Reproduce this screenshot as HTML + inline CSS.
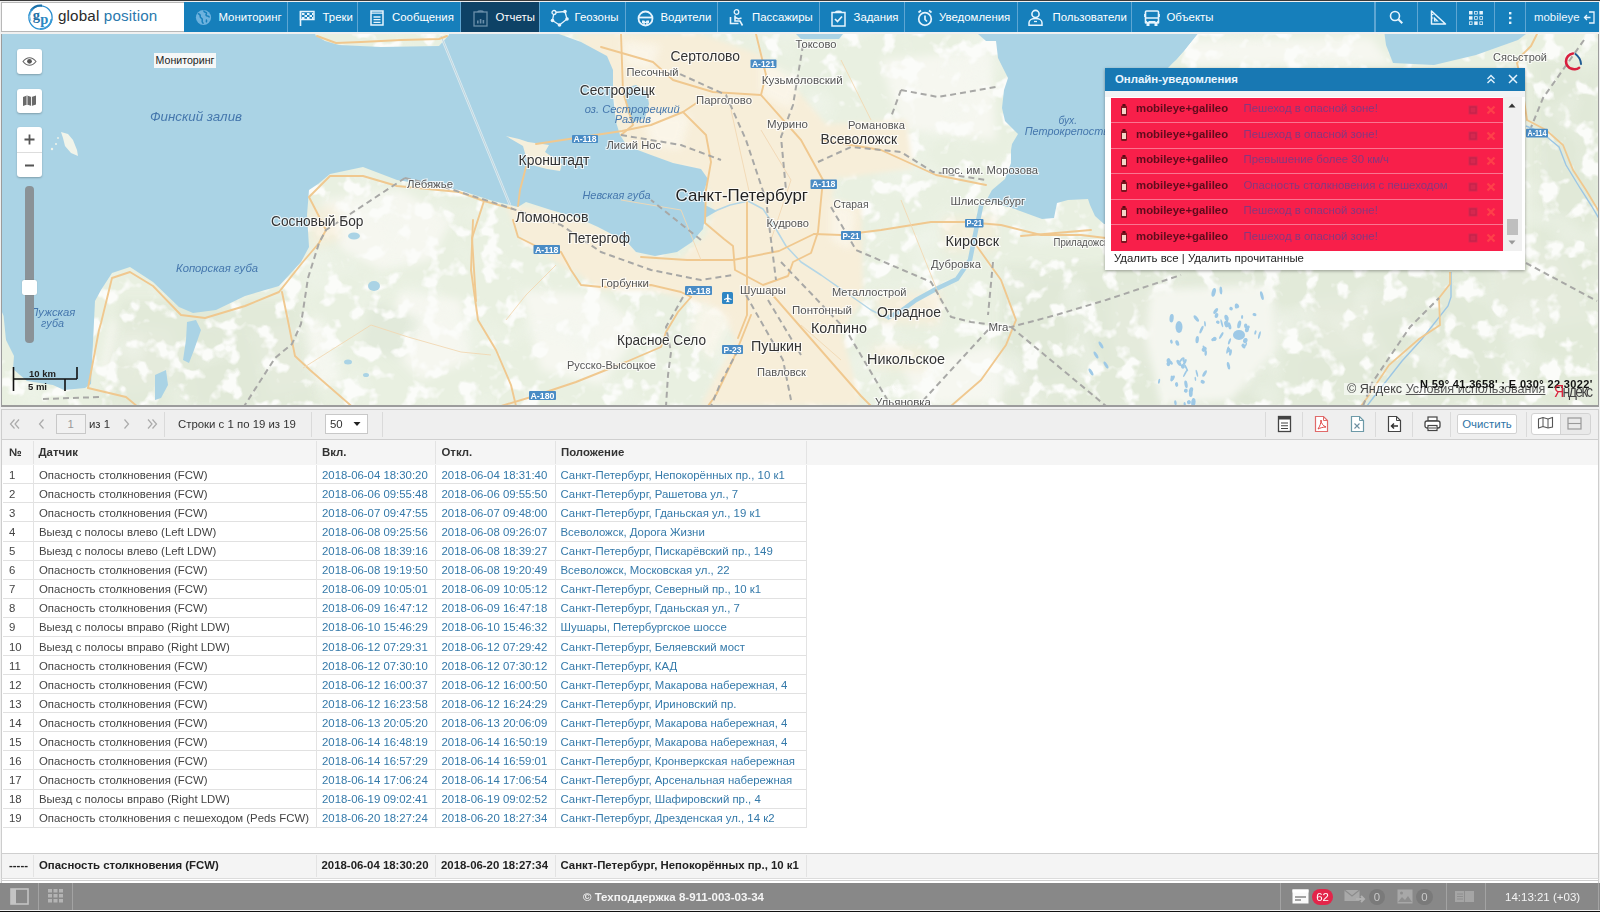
<!DOCTYPE html>
<html><head><meta charset="utf-8">
<style>
*{box-sizing:border-box;margin:0;padding:0}
html,body{width:1600px;height:912px;overflow:hidden;background:#f0f0f0;font-family:"Liberation Sans",sans-serif;font-size:11.4px;color:#333}
.abs{position:absolute}
#topline{left:0;top:0;width:1600px;height:1px;background:#3a3a3a}
#logo{left:1px;top:2px;width:183px;height:30px;background:#fff;border:1px solid #b8b8b8;border-right:none}
#nav{left:184px;top:2px;width:1415px;height:30px;background:#167fbb}
.ni{position:absolute;top:0;height:30px;color:#fff;font-size:11.4px;line-height:30px;white-space:nowrap;border-right:1px solid #5ea6d3}
.ni svg{position:absolute;top:7px}
.ni span{position:absolute;top:0}
#map{left:1px;top:34px;width:1598px;height:373px;background:#eef3e6;border:1px solid #9c9c9c;border-width:0 1px 2px 1px;overflow:hidden}
#tb{left:1px;top:409px;width:1598px;height:30px;background:#efefef;border:1px solid #c9c9c9;border-bottom:1px solid #d0d0d0}
#grid{left:1px;top:439px;width:1598px;height:444px;background:#fff;border-left:1px solid #c9c9c9;border-right:1px solid #c9c9c9}
#status{left:0;top:883px;width:1600px;height:27px;background:#878787}
#botline{left:0;top:910px;width:1600px;height:2px;background:#1e1e1e}
.ml{position:absolute;white-space:nowrap;color:#555;font-size:10.6px;line-height:14px;text-shadow:0 0 2px #fff,0 0 2px #fff}
.ml.med{font-size:13.6px;color:#333;line-height:18px}
.ml.big{color:#222;line-height:22px}
.ml.sm{font-size:10.8px;color:#555}
.mlw{position:absolute;white-space:nowrap;color:#3f75a8;font-style:italic;line-height:16px}
.shield{position:absolute;height:9.5px;background:#4f8fc6;color:#fff;font-size:8.5px;font-weight:700;line-height:9.5px;text-align:center;border-radius:1px;letter-spacing:-0.2px}
.ctl{position:absolute;width:25px;background:#fff;border-radius:3px;box-shadow:0 1px 2px rgba(0,0,0,.25)}
.prow{position:absolute;left:5.5px;width:392.5px;height:26px;background:#f81f4a}
.psep{position:absolute;left:5.5px;width:392.5px;height:1px;background:#fa7590}
.pn{position:absolute;left:25.5px;top:3.8px;font-size:11.4px;font-weight:700;color:#5e0b1c;line-height:14px;white-space:nowrap}
.pm{position:absolute;left:133px;top:3.8px;font-size:11.4px;color:#85387f;line-height:14px;white-space:nowrap}
.tbtxt{position:absolute;font-size:11.4px;color:#333;line-height:14px;white-space:nowrap}
.tsep{position:absolute;top:412px;width:1px;height:25px;background:#dadada}
.th{position:absolute;font-size:11.4px;font-weight:700;color:#333;line-height:14px;white-space:nowrap}
.td{position:absolute;font-size:11.4px;color:#444;line-height:14px;white-space:nowrap}
.td.lk{color:#3479a9}
</style></head><body>
<div id="topline" class="abs"></div>
<div id="logo" class="abs">
<svg class="abs" style="left:24px;top:1px" width="28" height="27" viewBox="0 0 28 27">
<circle cx="14.5" cy="13.5" r="11.6" fill="none" stroke="#2a8fd0" stroke-width="1.3"/>
<path d="M5 6.5A12 12 0 0 1 16 1.6" fill="none" stroke="#1b6fa8" stroke-width="2.2"/>
<path d="M3.2 12A11 11 0 0 1 7 4.5" fill="none" stroke="#2a8fd0" stroke-width="1.4"/>
<path d="M4.8 17A10 10 0 0 1 5.5 7" fill="none" stroke="#7cc3e8" stroke-width="1"/>
<path d="M14 25A11 11 0 0 0 25.5 15" fill="none" stroke="#3a9ad6" stroke-width="1.8"/>
<text x="6.8" y="16" font-family="Liberation Serif" font-weight="700" font-size="14.5" fill="#1d6fa6">g</text>
<text x="14.2" y="19.5" font-family="Liberation Serif" font-weight="700" font-size="14.5" fill="#2a86c2">p</text>
</svg>
<div class="abs" style="left:56px;top:1px;font-size:15.2px;line-height:24px;color:#2a2a2a;white-space:nowrap;letter-spacing:0.15px">global <span style="color:#2a78ad">position</span></div>
</div>
<div id="nav" class="abs">
<div class="ni" style="left:0;width:104px"><svg style="left:11px" width="17" height="17" viewBox="0 0 17 17"><circle cx="8.5" cy="8.5" r="7.6" fill="#6db2de"/><path d="M3 4.5c1.5.5 2.5 1.5 2.2 3-.2 1 1 1.5 1.8 2.3.7.8-.2 2 .3 3.2.3.8 1 1.3 1 1.8M9 1.5c-.3 1 .5 1.7 1.5 1.8 1 .1 1.3 1.2.7 2-.6.8.2 1.8 1.3 1.7 1 0 1.7.8 2 1.6M11 10.5c.7.6.8 1.8.2 2.8" fill="none" stroke="#167fbb" stroke-width="1.5"/></svg><span style="left:34.5px">Мониторинг</span></div>
<div class="ni" style="left:104px;width:70px"><svg style="left:10.5px;top:7.5px" width="17" height="16" viewBox="0 0 17 16"><path d="M1.5 1v15" stroke="#e6f4fd" stroke-width="1.6"/><path d="M1.5 1.5h13.5v8H1.5z" fill="none" stroke="#e6f4fd" stroke-width="1.4"/><path d="M3 3h2.5v2H3zM8 3h2.5v2H8zM5.5 5h2.5v2H5.5zM10.5 5h2.5v2h-2.5zM3 7h2.5v2H3zM8 7h2.5v2H8zM13 3h1.5v2H13zM13 7h1.5v2H13z" fill="#e6f4fd"/></svg><span style="left:34.5px">Треки</span></div>
<div class="ni" style="left:174px;width:103px"><svg style="left:11.5px;top:8px" width="14" height="16" viewBox="0 0 14 16"><rect x="1" y="1" width="12" height="14" fill="none" stroke="#e6f4fd" stroke-width="1.5"/><path d="M1 3.2h12M3.5 7h7M3.5 9.7h7M3.5 12.3h7" stroke="#e6f4fd" stroke-width="1.3"/></svg><span style="left:34px">Сообщения</span></div>
<div class="ni" style="left:277px;width:79px;background:#0e4266;border-right-color:#5ea6d3"><svg style="left:12px;top:7.5px" width="15" height="17" viewBox="0 0 15 17"><rect x="1" y="2" width="13" height="14" fill="none" stroke="#6b8faa" stroke-width="1.3"/><path d="M4.5 1.8c1-1 5-1 6 0" fill="none" stroke="#6b8faa" stroke-width="1.4"/><path d="M4 13.5v-3h1.6v3zM6.8 13.5v-4.5h1.6v4.5zM9.6 13.5v-3.5h1.6v3.5z" fill="#6b8faa"/></svg><span style="left:34.5px">Отчеты</span></div>
<div class="ni" style="left:356px;width:86px"><svg style="left:10px;top:6.5px" width="19" height="18" viewBox="0 0 19 18"><path d="M4 3.5L15 2.5 17 10 9.5 16 2.5 11.5z" fill="none" stroke="#e6f4fd" stroke-width="1.3"/><circle cx="4" cy="3.5" r="2" fill="#167fbb" stroke="#e6f4fd" stroke-width="1.3"/><circle cx="15" cy="2.5" r="1.8" fill="#e6f4fd"/><circle cx="17" cy="10" r="1.8" fill="#e6f4fd"/><circle cx="9.5" cy="16" r="1.8" fill="#e6f4fd"/><circle cx="2.5" cy="11.5" r="1.8" fill="#e6f4fd"/></svg><span style="left:34.5px">Геозоны</span></div>
<div class="ni" style="left:442px;width:92px"><svg style="left:11px;top:7.5px" width="17" height="17" viewBox="0 0 17 17"><circle cx="8.5" cy="8.5" r="7" fill="none" stroke="#e6f4fd" stroke-width="1.8"/><path d="M2 7.5h13" stroke="#e6f4fd" stroke-width="1.8"/><path d="M5 10.5h2.3l1.2 1.5 1.2-1.5H12v2.5H5z" fill="#e6f4fd"/><path d="M7 13v3M10 13v3" stroke="#e6f4fd" stroke-width="1.5"/></svg><span style="left:34.5px">Водители</span></div>
<div class="ni" style="left:534px;width:102px"><svg style="left:11px;top:7px" width="16" height="17" viewBox="0 0 16 17"><circle cx="7.5" cy="3" r="2.3" fill="none" stroke="#e6f4fd" stroke-width="1.3"/><path d="M6 6.5v5.5h5l2.5 4.5M6.5 8.5l3 1.5 3-1M1.5 8v6.5h8" fill="none" stroke="#e6f4fd" stroke-width="1.6"/></svg><span style="left:34px">Пассажиры</span></div>
<div class="ni" style="left:636px;width:85px"><svg style="left:11px;top:7.5px" width="15" height="17" viewBox="0 0 15 17"><rect x="1" y="2.5" width="13" height="13.5" fill="none" stroke="#e6f4fd" stroke-width="1.5"/><path d="M4.5 2.3c1-1.3 5-1.3 6 0" fill="none" stroke="#e6f4fd" stroke-width="1.6"/><path d="M4 9l2.5 2.5 4.5-5" fill="none" stroke="#e6f4fd" stroke-width="1.7"/></svg><span style="left:33.5px">Задания</span></div>
<div class="ni" style="left:721px;width:113px"><svg style="left:11.5px;top:6.5px" width="16" height="18" viewBox="0 0 16 18"><circle cx="8" cy="10" r="6.3" fill="none" stroke="#e6f4fd" stroke-width="1.7"/><path d="M8 6.5v4l2 2M1.5 3.5l2.5-2M14.5 3.5l-2.5-2" fill="none" stroke="#e6f4fd" stroke-width="1.7"/></svg><span style="left:34px">Уведомления</span></div>
<div class="ni" style="left:834px;width:114px"><svg style="left:10px;top:7px" width="15" height="17" viewBox="0 0 15 17"><circle cx="7.5" cy="5" r="3.6" fill="none" stroke="#e6f4fd" stroke-width="1.6"/><path d="M1 16.2v-2.5c0-2.5 3-4.2 6.5-4.2s6.5 1.7 6.5 4.2v2.5z" fill="none" stroke="#e6f4fd" stroke-width="1.5"/><path d="M6 12.5h3" stroke="#e6f4fd" stroke-width="1.3"/></svg><span style="left:34.5px">Пользователи</span></div>
<div class="ni" style="left:948px;width:243px;border-right:1px solid #5ea6d3"><svg style="left:12px;top:7.5px" width="16" height="16" viewBox="0 0 16 16"><path d="M2.5 1h11c.8 0 1 .5 1 1v10.5h-13V2c0-.5.2-1 1-1z" fill="none" stroke="#e6f4fd" stroke-width="1.6"/><path d="M1.5 8h13" stroke="#e6f4fd" stroke-width="1.5"/><path d="M1 11h14v2.5H1z" fill="#e6f4fd"/><rect x="2.5" y="13" width="3" height="3" fill="#e6f4fd"/><rect x="10.5" y="13" width="3" height="3" fill="#e6f4fd"/><path d="M.3 4v3M15.7 4v3" stroke="#e6f4fd" stroke-width="1.2"/><rect x="3" y="10.5" width="1.6" height="1.3" fill="#167fbb"/><rect x="11.4" y="10.5" width="1.6" height="1.3" fill="#167fbb"/></svg><span style="left:34.5px">Объекты</span></div>
<div class="ni" style="left:1190.5px;width:43px;border-left:1px solid #5ea6d3"><svg style="left:13px;top:8px" width="15" height="15" viewBox="0 0 15 15"><circle cx="6" cy="6" r="4.5" fill="none" stroke="#e6f4fd" stroke-width="1.6"/><path d="M9.3 9.3l4 4" stroke="#e6f4fd" stroke-width="2"/></svg></div>
<div class="ni" style="left:1233.5px;width:39px"><svg style="left:12px;top:8px" width="17" height="15" viewBox="0 0 17 15"><path d="M1.5 1v13h14z" fill="none" stroke="#e6f4fd" stroke-width="1.5" stroke-linejoin="round"/><path d="M4.5 8v3h3z" fill="none" stroke="#e6f4fd" stroke-width="1.1"/><path d="M1.5 4.5h2M1.5 8h2" stroke="#e6f4fd" stroke-width="1"/></svg></div>
<div class="ni" style="left:1272px;width:39px"><svg style="left:12px;top:7.5px" width="16" height="16" viewBox="0 0 16 16"><g fill="#e6f4fd"><rect x="1" y="1" width="3.5" height="3.5"/><rect x="6.2" y="1" width="3.5" height="3.5"/><rect x="11.4" y="1" width="3.5" height="3.5"/><rect x="1" y="6.2" width="3.5" height="3.5"/><rect x="6.2" y="6.2" width="3.5" height="3.5"/><rect x="11.4" y="6.2" width="3.5" height="3.5"/><rect x="1" y="11.4" width="3.5" height="3.5"/><rect x="6.2" y="11.4" width="3.5" height="3.5"/><rect x="11.4" y="11.4" width="3.5" height="3.5"/></g><g fill="#167fbb"><rect x="7" y="1.8" width="1.9" height="1.9"/><rect x="12.2" y="7" width="1.9" height="1.9"/><rect x="1.8" y="12.2" width="1.9" height="1.9"/><rect x="12.2" y="12.2" width="1.9" height="1.9"/><rect x="7" y="7" width="1.9" height="1.9"/></g></svg></div>
<div class="ni" style="left:1311px;width:31px"><svg style="left:13px;top:9px" width="5" height="14" viewBox="0 0 5 14"><g fill="#e6f4fd"><rect x="1" y="1" width="2.4" height="2.4"/><rect x="1" y="5.8" width="2.4" height="2.4"/><rect x="1" y="10.6" width="2.4" height="2.4"/></g></svg></div>
<div class="ni" style="left:1342px;width:73px;border-right:none"><span style="left:8px;color:#eef8ff">mobileye</span><svg style="left:57px;top:9px" width="12" height="13" viewBox="0 0 12 13"><path d="M6 1h5v11H6" fill="none" stroke="#e6f4fd" stroke-width="1.3"/><path d="M1.5 6.5h6M4 4l-2.5 2.5L4 9" fill="none" stroke="#e6f4fd" stroke-width="1.3"/></svg></div>
</div>

<div id="map" class="abs">
<svg class="abs" style="left:0;top:0" width="1598" height="372" viewBox="1 34 1598 372">
<defs>
<filter id="blur1"><feGaussianBlur stdDeviation="4"/></filter>
<filter id="blur2" x="-10%" y="-10%" width="120%" height="120%"><feGaussianBlur stdDeviation="2.5"/></filter>
<filter id="tex" x="0" y="30" width="1600" height="380" filterUnits="userSpaceOnUse"><feTurbulence type="fractalNoise" baseFrequency="0.05" numOctaves="3" seed="11"/><feColorMatrix type="matrix" values="0 0 0 0 0.965  0 0 0 0 0.972  0 0 0 0 0.95  7 0 0 0 -3.8"/></filter>
<filter id="tex2" x="0" y="30" width="1600" height="380" filterUnits="userSpaceOnUse"><feTurbulence type="fractalNoise" baseFrequency="0.02" numOctaves="2" seed="5"/><feColorMatrix type="matrix" values="0 0 0 0 0.89  0 0 0 0 0.925  0 0 0 0 0.86  3 0 0 0 -1.55"/></filter>
</defs>
<rect x="0" y="30" width="1600" height="380" fill="#e9f0e1"/>
<!-- lighter field patches -->
<g fill="#f6f7f0" filter="url(#blur1)">
<path d="M320 200 L400 190 L450 220 L430 260 L380 270 L340 250z"/>
<path d="M400 290 L460 300 L470 360 L420 380 L380 340z"/>
<path d="M520 290 L600 295 L640 330 L600 385 L540 370z"/>
<path d="M110 320 L170 330 L180 380 L130 395 L100 370z"/>
<path d="M880 60 L990 50 L995 140 L900 130z"/>
<path d="M1110 290 L1250 280 L1300 330 L1210 385 L1110 350z"/>
<path d="M1300 300 L1400 290 L1420 360 L1330 390z"/>
<path d="M900 365 L990 345 L1060 400 L920 405z"/>
<path d="M1480 250 L1560 245 L1590 320 L1500 340z"/>
<path d="M1185 40 L1370 38 L1390 64 L1185 66z"/>
<path d="M250 330 L320 320 L340 380 L270 395z"/>
<path d="M1430 140 L1520 150 L1510 240 L1440 230z"/>
</g>
<!-- darker forest patches -->
<g fill="#e2eadb" filter="url(#blur1)">
<path d="M1010 280 L1100 290 L1110 360 L1040 380 L1000 340z"/>
<path d="M1170 300 L1270 320 L1250 400 L1160 395z"/>
<path d="M1370 320 L1460 300 L1500 380 L1410 400z"/>
<path d="M1540 90 L1595 80 L1595 200 L1550 220z"/>
<path d="M190 335 L240 325 L260 400 L200 400z"/>
<path d="M370 300 L420 320 L400 360 L360 350z"/>
<path d="M1300 360 L1380 350 L1370 400 L1300 400z"/>
</g>
<g fill="#e1e9d8" filter="url(#blur1)" opacity="0.8">
<path d="M1000 265 L1600 250 L1600 410 L1000 410z"/>
<path d="M1530 60 L1600 60 L1600 260 L1530 260z"/>
<path d="M120 300 L300 300 L320 410 L100 410z"/>
</g>
<rect x="0" y="30" width="1600" height="380" filter="url(#tex2)" opacity="0.6"/>
<rect x="0" y="30" width="1600" height="380" filter="url(#tex)"/>
<!-- urban areas -->
<g fill="#f7eed9" filter="url(#blur2)">
<path d="M575 34 L700 34 L760 55 L800 95 L830 130 L860 150 L835 180 L830 200 L860 205 L862 300 L840 330 L860 405 L700 405 L735 340 L718 310 L690 300 L650 290 L600 290 L560 262 L540 250 L620 256 L680 258 L705 235 L712 212 L706 186 L700 172 L660 162 L625 145 L615 122 L612 96 L608 74z"/>
<path d="M505 205 L550 210 L597 227 L626 242 L650 265 L600 280 L570 270 L520 240z"/>
<path d="M815 125 L905 120 L912 168 L840 178z"/>
<path d="M500 165 L545 168 L548 186 L505 190z"/>
</g>
<g fill="#f7eed9" filter="url(#blur1)">
<path d="M875 295 L940 292 L938 325 L880 322z" opacity="0.8"/>
<path d="M940 218 L995 215 L995 250 L945 252z" opacity="0.7"/>
<path d="M305 210 L335 205 L340 240 L312 248z" opacity="0.7"/>
<path d="M870 345 L925 348 L925 372 L872 368z" opacity="0.6"/>
</g>
<g fill="#fbf7ec" filter="url(#blur1)" opacity="0.8">
<path d="M620 40 L660 45 L650 70 L625 65z"/><path d="M760 60 L800 80 L790 110 L760 95z"/>
<path d="M700 300 L730 320 L710 360 L690 330z"/><path d="M830 200 L855 210 L850 250 L830 240z"/>
<path d="M640 110 L690 115 L680 150 L650 145z"/>
</g>
<!-- water -->
<g fill="#aad3e5">
<path d="M0 30 L317 30 L314 35 L324 41 L338 45 L380 47 L438 46 L448 35 L448 30 L556 30 L558 34 L580 42 L606 56 L612 70 L612 96 L615 122 L619 135 L626 146 L650 155 L672 163 L700 169 L707 179 L702 194 L704 205 L716 211 L704 218 L702 229 L691 242 L676 252 L654 256 L635 252 L626 242 L597 227 L575 217 L550 210 L525 202 L517 207 L492 201 L458 190 L396 180 L362 167 L329 174 L317 184 L308 190 L306 215 L308 247 L300 262 L278 286 L244 296 L215 310 L192 313 L178 307 L152 282 L129 267 L111 273 L100 290 L94 301 L90 384 L84 388 L63 390 L52 385 L26 381 L12 369 L13 356 L5 340 L2.6 316 L0 310z"/>
<path d="M977 30 L1200 30 L1195 36 L1185 48 L1175 60 L1165 68 L1300 68 L1300 224 L1103 224 L1094 216 L1089 205 L1087 199 L1067 200 L1056 203 L1053 218 L1041 219 L1030 215 L1014 209 L1000 205 L985 201 L991 190 L1004 179 L1010 163 L1010 150 L1011 144 L1017 134 L1004 121 L1001 108 L1003 90 L1007 78 L1003 70 L997 58 L995 41 L985 41 L977 34z"/>
<path d="M1383 30 L1528 30 L1525 34 L1517 40 L1475 55 L1433 65 L1392 63 L1385 45z"/>
<path d="M1150 30 L1198 30 L1196 34 L1183 51 L1167 68 L1150 68z"/>
<!-- Sestroretsk Razliv -->
<path d="M623 88 L635 85 L646 92 L648 104 L644 118 L633 122 L626 112z"/>
<!-- Toksovo lakes -->
<path d="M795 34 L842 34 L838 39 L800 39z"/>
<!-- small lakes -->
<path d="M186 322 L195 320 L200 330 L193 350 L188 363 L182 360 L185 340z"/>
<path d="M154 375 L165 370 L167 385 L160 398 L154 400z"/>
<ellipse cx="373" cy="286" rx="6" ry="5"/>
<ellipse cx="353" cy="236" rx="6" ry="3.5"/>
<ellipse cx="1018" cy="117" rx="3" ry="3"/>
<ellipse cx="347" cy="362" rx="4" ry="2.5"/>
<ellipse cx="365" cy="375" rx="3" ry="2"/>


</g>
<path d="M981 202 L975 230 L969 260 L956 279 L935 289 L915 300 L900 311 L886 318" fill="none" stroke="#aad3e5" stroke-width="4.5" stroke-linejoin="round"/>
<path d="M886 318 L870 310 L850 296 L820 275 L800 262 L785 246 L772 224 L762 209 L747 201 L729 205 L714 211" fill="none" stroke="#b4d6e6" stroke-width="1.5" stroke-linejoin="round"/>
<!-- Kronshtadt island -->
<path d="M505 136 L518 139 L527 142 L548 145 L544 152 L561 164 L559 171 L546 169 L527 164 L522 146z" fill="#f5efdc"/>
<!-- island west -->
<path d="M60 132 L67 134 L72 140 L76 150 L77 156 L70 153 L64 146 L62 138z" fill="#f1f4ea"/><circle cx="51" cy="149" r="1.2" fill="#f1f4ea"/><circle cx="55" cy="144" r="1" fill="#f1f4ea"/><circle cx="57" cy="138" r="0.9" fill="#f1f4ea"/>
<!-- ship channel -->
<path d="M440 36 L509 205" stroke="#e8f1f5" stroke-width="2.5" opacity="0.8"/>
<path d="M440 36 L509 205" stroke="#b9cfd8" stroke-width="0.8"/>
<!-- roads -->
<g fill="none" stroke="#f0c88f" stroke-width="1.9" stroke-linejoin="round" stroke-linecap="round">
<path d="M535 144 L621 131 L650 125 L682 112 L697 102"/>
<path d="M316 36 L335 43 L360 42 L400 40 L438 39 L446 36"/>
<path d="M525 167 L519 190 L517 206"/>
<path d="M512 220 L517 237 L535 246 L560 252 L570 270 L580 285 L600 287 L650 285 L680 292 L690 297"/>
<path d="M690 297 L677 312 L665 332 L660 347 L625 362 L575 382 L530 397 L500 406"/>
<path d="M472 220 L470 270 L477 320 L495 350 L510 385 L515 406"/>
<path d="M750 315 L732 360 L715 395 L707 406"/>
<path d="M813 234 L840 235 L880 230 L930 222 L964 222 L1000 225 L1040 235 L1080 235 L1105 238"/>
<path d="M975 245 L1000 280 L1015 320 L1005 345 L980 380 L950 406"/>
<path d="M769 292 L860 396 L870 406"/>
<path d="M600 47 L652 62 L672 80 L712 92 L760 95 L765 75 L755 34"/>
<path d="M620 34 L622 92 L632 125 L620 135"/>
<path d="M682 112 L705 135 L710 162 L705 190"/>
<path d="M705 190 L704 223 L723 239 L732 246 L734 270 L762 285 L787 276 L792 262 L810 253 L817 232 L820 200 L822 180 L800 140 L760 95"/>
<path d="M640 257 L686 260 L732 260 L778 251 L813 234"/>
<path d="M746 200 L746 315 L737 338"/>
<path d="M87 388 L98 330 L100 323 L111 278 L129 272 L152 286 L180 315 L204 318 L244 306 L278 292 L301 263 L318 243 L325 230 L308 197 L329 176 L362 176 L396 186 L458 192 L483 201 L512 209"/>
<path d="M281 292 L287 321 L294 356 L309 370 L355 410"/>
<path d="M483 201 L471 238 L475 301"/>
<path d="M87 388 L125 397 L137 407"/>
<path d="M820 140 L880 150 L935 175 L985 185"/>
<path d="M1020 236 L1090 230"/>
<path d="M1536 34 L1530 46 L1521 55 L1516 63 L1520 80 L1526 120"/>
</g>
<g fill="none" stroke="#f2d8b3" stroke-width="1" opacity="0.9">
<path d="M620 200 L680 210 L700 260"/><path d="M760 130 L790 180 L770 240"/><path d="M730 110 L750 200"/>
<path d="M840 60 L870 120"/><path d="M900 200 L940 300"/>

<path d="M302 368 L370 325 L407 337 L460 352 L490 355"/>
<path d="M555 265 L525 295 L505 320"/><path d="M800 325 L840 360"/>
</g>
<!-- railways -->
<g fill="none" stroke="#a8a8a6" stroke-width="2" stroke-dasharray="6 4">
<path d="M404 178 L375 197 L325 230 L318 243 L307 278 L300 324 L291 344 L274 358 L242 408"/>
<path d="M404 178 L446 188 L500 205 L560 225 L600 252 L650 270 L700 280 L732 275"/>
<path d="M42 399 L100 397"/>
<path d="M830 207 L855 250 L930 282 L950 317 L970 322 L1010 327 L1055 315 L1105 300 L1180 275"/>
<path d="M1010 327 L1105 406"/><path d="M987 330 L917 406"/><path d="M992 262 L987 315"/>
<path d="M780 262 L845 330 L890 406"/>
<path d="M900 90 L937 97 L995 87"/><path d="M900 90 L890 117"/>
<path d="M817 162 L850 147 L900 152 L932 172 L985 180"/>
<path d="M802 45 L792 105 L780 137 L785 190"/>
<path d="M670 70 L725 95 L745 140 L765 200 L775 280"/>
<path d="M620 135 L680 145 L720 160"/>
<path d="M682 297 L665 327 L670 352 L667 375 L665 406"/>
<path d="M745 295 L762 325 L782 360 L790 400"/>
<path d="M737 350 L720 382 L710 406"/>
<path d="M767 300 L800 355"/>
<path d="M1583 40 L1542 98 L1529 130"/><path d="M1525 263 L1596 301"/>

<path d="M700 240 L650 200"/>
</g>
<!-- east river -->
<path d="M1525 126 L1540 132 L1558 147 L1565 165 L1579 188 L1590 205 L1600 222 M1450 272 L1450 297 L1447 306 L1421 339 L1401 361 L1372 398 L1366 406" fill="none" stroke="#9cc6e4" stroke-width="1.4"/>
<path d="M1526 120 L1545 130 L1562 145 L1572 170 L1585 190 L1600 215 M1449 272 L1449 284 L1438 298 L1439 325 L1418 339 L1388 365 L1366 398 L1360 406" fill="none" stroke="#f0c88f" stroke-width="1.8"/>
<path d="M1362 406 L1371 383 L1409 327 L1438 298" fill="none" stroke="#a8a8a6" stroke-width="2" stroke-dasharray="6 4"/>
<g fill="#f4f6ef" filter="url(#blur1)"><path d="M1150 290 L1270 285 L1275 350 L1230 400 L1160 405 L1145 340z"/></g><g fill="#9ec9e6"><ellipse cx="1178" cy="327" rx="3.5" ry="6"/><ellipse cx="1238" cy="335" rx="6" ry="5"/><ellipse cx="1229.5" cy="352.5" rx="1.3" ry="3.3" transform="rotate(10 1229.5 352.5)"/><ellipse cx="1181.8" cy="366.4" rx="2.0" ry="2.3" transform="rotate(-21 1181.8 366.4)"/><ellipse cx="1246.0" cy="329.4" rx="2.0" ry="2.9" transform="rotate(11 1246.0 329.4)"/><ellipse cx="1190.0" cy="390.3" rx="2.0" ry="3.1" transform="rotate(19 1190.0 390.3)"/><ellipse cx="1225.2" cy="324.2" rx="1.9" ry="3.3" transform="rotate(-16 1225.2 324.2)"/><ellipse cx="1203.6" cy="373.5" rx="1.5" ry="3.7" transform="rotate(30 1203.6 373.5)"/><ellipse cx="1219.9" cy="290.5" rx="1.4" ry="3.9" transform="rotate(-4 1219.9 290.5)"/><ellipse cx="1202.7" cy="347.2" rx="0.9" ry="1.9" transform="rotate(-23 1202.7 347.2)"/><ellipse cx="1244.7" cy="325.9" rx="1.7" ry="2.4" transform="rotate(1 1244.7 325.9)"/><ellipse cx="1171.6" cy="378.4" rx="1.6" ry="3.3" transform="rotate(32 1171.6 378.4)"/><ellipse cx="1212.7" cy="292.3" rx="2.0" ry="4.5" transform="rotate(14 1212.7 292.3)"/><ellipse cx="1192.4" cy="402.3" rx="2.2" ry="4.2" transform="rotate(6 1192.4 402.3)"/><ellipse cx="1225.5" cy="317.9" rx="2.0" ry="3.2" transform="rotate(-17 1225.5 317.9)"/><ellipse cx="1201.7" cy="381.8" rx="2.2" ry="1.8" transform="rotate(24 1201.7 381.8)"/><ellipse cx="1220.3" cy="335.5" rx="1.2" ry="3.8" transform="rotate(30 1220.3 335.5)"/><ellipse cx="1195.9" cy="373.3" rx="0.9" ry="3.7" transform="rotate(-14 1195.9 373.3)"/><ellipse cx="1260.9" cy="295.6" rx="1.5" ry="4.5" transform="rotate(-15 1260.9 295.6)"/><ellipse cx="1194.4" cy="378.8" rx="0.8" ry="2.1" transform="rotate(-7 1194.4 378.8)"/><ellipse cx="1220.8" cy="323.3" rx="0.9" ry="4.1" transform="rotate(-15 1220.8 323.3)"/><ellipse cx="1204.7" cy="353.0" rx="1.3" ry="2.9" transform="rotate(2 1204.7 353.0)"/><ellipse cx="1214.7" cy="311.0" rx="1.6" ry="3.4" transform="rotate(35 1214.7 311.0)"/><ellipse cx="1167.3" cy="364.0" rx="1.8" ry="2.2" transform="rotate(-16 1167.3 364.0)"/><ellipse cx="1247.2" cy="327.0" rx="1.6" ry="1.5" transform="rotate(-7 1247.2 327.0)"/><ellipse cx="1177.9" cy="362.9" rx="1.7" ry="3.4" transform="rotate(-35 1177.9 362.9)"/><ellipse cx="1215.5" cy="315.5" rx="1.8" ry="2.6" transform="rotate(17 1215.5 315.5)"/><ellipse cx="1179.8" cy="360.4" rx="0.9" ry="3.5" transform="rotate(37 1179.8 360.4)"/><ellipse cx="1227.9" cy="349.9" rx="1.6" ry="2.5" transform="rotate(-11 1227.9 349.9)"/><ellipse cx="1175.6" cy="384.5" rx="1.6" ry="2.4" transform="rotate(-10 1175.6 384.5)"/><ellipse cx="1228.5" cy="325.8" rx="1.6" ry="3.7" transform="rotate(-15 1228.5 325.8)"/><ellipse cx="1183.7" cy="404.1" rx="1.1" ry="2.1" transform="rotate(-5 1183.7 404.1)"/><ellipse cx="1225.6" cy="322.1" rx="1.3" ry="2.5" transform="rotate(27 1225.6 322.1)"/><ellipse cx="1158.1" cy="381.3" rx="1.0" ry="2.5" transform="rotate(12 1158.1 381.3)"/><ellipse cx="1241.1" cy="317.0" rx="1.1" ry="1.9" transform="rotate(2 1241.1 317.0)"/><ellipse cx="1187.9" cy="402.2" rx="2.0" ry="2.1" transform="rotate(-18 1187.9 402.2)"/><ellipse cx="1236.1" cy="305.9" rx="1.9" ry="2.5" transform="rotate(-30 1236.1 305.9)"/><ellipse cx="1174.4" cy="402.7" rx="1.2" ry="2.5" transform="rotate(-7 1174.4 402.7)"/><ellipse cx="1213.6" cy="338.9" rx="2.1" ry="2.0" transform="rotate(-40 1213.6 338.9)"/><ellipse cx="1203.2" cy="349.2" rx="2.2" ry="2.8" transform="rotate(36 1203.2 349.2)"/><ellipse cx="1238.2" cy="324.4" rx="1.8" ry="4.0" transform="rotate(13 1238.2 324.4)"/><ellipse cx="1170.2" cy="362.8" rx="1.3" ry="2.2" transform="rotate(-35 1170.2 362.8)"/><ellipse cx="1216.8" cy="322.2" rx="1.9" ry="1.6" transform="rotate(32 1216.8 322.2)"/><ellipse cx="1170.6" cy="318.2" rx="2.1" ry="4.2" transform="rotate(6 1170.6 318.2)"/><ellipse cx="1254.4" cy="332.5" rx="1.0" ry="2.4" transform="rotate(13 1254.4 332.5)"/><ellipse cx="1167.8" cy="361.4" rx="2.1" ry="3.3" transform="rotate(-13 1167.8 361.4)"/><ellipse cx="1227.5" cy="365.8" rx="1.5" ry="3.8" transform="rotate(-12 1227.5 365.8)"/><ellipse cx="1184.8" cy="390.7" rx="1.9" ry="2.0" transform="rotate(23 1184.8 390.7)"/><ellipse cx="1253.5" cy="314.6" rx="2.0" ry="1.5" transform="rotate(10 1253.5 314.6)"/><ellipse cx="1182.5" cy="359.6" rx="1.2" ry="2.3" transform="rotate(2 1182.5 359.6)"/><ellipse cx="1212.0" cy="339.5" rx="1.9" ry="1.5" transform="rotate(-36 1212.0 339.5)"/><ellipse cx="1184.3" cy="373.1" rx="0.9" ry="4.4" transform="rotate(28 1184.3 373.1)"/><ellipse cx="1244.2" cy="341.0" rx="1.2" ry="2.4" transform="rotate(-12 1244.2 341.0)"/><ellipse cx="1170.4" cy="341.7" rx="1.3" ry="2.1" transform="rotate(-14 1170.4 341.7)"/><ellipse cx="1242.5" cy="346.1" rx="1.8" ry="2.6" transform="rotate(-34 1242.5 346.1)"/><ellipse cx="1185.0" cy="384.2" rx="1.6" ry="3.8" transform="rotate(-10 1185.0 384.2)"/><ellipse cx="1235.1" cy="306.1" rx="1.4" ry="2.6" transform="rotate(-0 1235.1 306.1)"/><ellipse cx="1176.3" cy="343.0" rx="1.8" ry="2.9" transform="rotate(-20 1176.3 343.0)"/><ellipse cx="1204.0" cy="323.8" rx="0.9" ry="2.8" transform="rotate(-6 1204.0 323.8)"/><ellipse cx="1200.5" cy="329.6" rx="1.3" ry="4.2" transform="rotate(23 1200.5 329.6)"/><ellipse cx="1226.6" cy="350.0" rx="1.0" ry="3.9" transform="rotate(13 1226.6 350.0)"/><ellipse cx="1196.2" cy="339.6" rx="1.7" ry="3.7" transform="rotate(5 1196.2 339.6)"/><ellipse cx="1245.0" cy="344.5" rx="0.8" ry="1.9" transform="rotate(22 1245.0 344.5)"/><ellipse cx="1185.1" cy="367.7" rx="0.9" ry="4.1" transform="rotate(-26 1185.1 367.7)"/><ellipse cx="1258.4" cy="335.1" rx="1.0" ry="4.0" transform="rotate(14 1258.4 335.1)"/><ellipse cx="1195.3" cy="318.5" rx="1.6" ry="3.9" transform="rotate(-37 1195.3 318.5)"/><ellipse cx="1230.1" cy="308.6" rx="1.8" ry="1.8" transform="rotate(20 1230.1 308.6)"/><ellipse cx="1183.9" cy="361.9" rx="1.3" ry="3.2" transform="rotate(26 1183.9 361.9)"/><ellipse cx="1228.5" cy="341.3" rx="1.1" ry="3.3" transform="rotate(20 1228.5 341.3)"/><ellipse cx="1171.0" cy="378.0" rx="1.4" ry="2.6" transform="rotate(-7 1171.0 378.0)"/><ellipse cx="1244.3" cy="340.6" rx="2.2" ry="2.7" transform="rotate(20 1244.3 340.6)"/><ellipse cx="1189.8" cy="393.5" rx="1.9" ry="3.5" transform="rotate(1 1189.8 393.5)"/><ellipse cx="1095" cy="355" rx="1.5" ry="4" transform="rotate(-30 1095 355)"/><ellipse cx="1100" cy="345" rx="1.5" ry="4" transform="rotate(-30 1100 345)"/><ellipse cx="1105" cy="365" rx="1.5" ry="4" transform="rotate(-30 1105 365)"/><ellipse cx="1090" cy="372" rx="1.5" ry="4" transform="rotate(-30 1090 372)"/></g>
<g transform="translate(721,292)"><rect width="11" height="12" rx="1.5" fill="#2f86c4"/><path d="M2 7l3-1.3V3c0-.7.4-1.1.8-1.1s.8.4.8 1.1v2.7l3 1.3v1L6.6 7.3v1.6l.9.7v.7l-1.7-.4-1.7.4v-.7l.9-.7V7.3L2 8z" fill="#fff"/></g>
<g font-family="Liberation Sans"><text x="674.5" y="201.3" font-size="17" fill="#222" textLength="132.5" lengthAdjust="spacingAndGlyphs" stroke="#fff" stroke-width="2.2" stroke-opacity="0.75" paint-order="stroke">Санкт-Петербург</text>
<text x="270" y="225.7" font-size="13.8" fill="#333" textLength="92.5" lengthAdjust="spacingAndGlyphs" stroke="#fff" stroke-width="2.2" stroke-opacity="0.75" paint-order="stroke">Сосновый Бор</text>
<text x="669.5" y="60.7" font-size="13.8" fill="#333" textLength="69.5" lengthAdjust="spacingAndGlyphs" stroke="#fff" stroke-width="2.2" stroke-opacity="0.75" paint-order="stroke">Сертолово</text>
<text x="578.75" y="94.7" font-size="13.8" fill="#333" textLength="75.0" lengthAdjust="spacingAndGlyphs" stroke="#fff" stroke-width="2.2" stroke-opacity="0.75" paint-order="stroke">Сестрорецк</text>
<text x="517.6" y="165.0" font-size="13.8" fill="#333" textLength="70.8" lengthAdjust="spacingAndGlyphs" stroke="#fff" stroke-width="2.2" stroke-opacity="0.75" paint-order="stroke">Кронштадт</text>
<text x="514.5" y="221.7" font-size="13.8" fill="#333" textLength="73.0" lengthAdjust="spacingAndGlyphs" stroke="#fff" stroke-width="2.2" stroke-opacity="0.75" paint-order="stroke">Ломоносов</text>
<text x="567" y="243.4" font-size="13.8" fill="#333" textLength="62.0" lengthAdjust="spacingAndGlyphs" stroke="#fff" stroke-width="2.2" stroke-opacity="0.75" paint-order="stroke">Петергоф</text>
<text x="819.5" y="144.2" font-size="13.8" fill="#333" textLength="76.5" lengthAdjust="spacingAndGlyphs" stroke="#fff" stroke-width="2.2" stroke-opacity="0.75" paint-order="stroke">Всеволожск</text>
<text x="944.5" y="245.7" font-size="13.8" fill="#333" textLength="53.5" lengthAdjust="spacingAndGlyphs" stroke="#fff" stroke-width="2.2" stroke-opacity="0.75" paint-order="stroke">Кировск</text>
<text x="616" y="344.7" font-size="13.8" fill="#333" textLength="89.0" lengthAdjust="spacingAndGlyphs" stroke="#fff" stroke-width="2.2" stroke-opacity="0.75" paint-order="stroke">Красное Село</text>
<text x="750" y="350.7" font-size="13.8" fill="#333" textLength="51.0" lengthAdjust="spacingAndGlyphs" stroke="#fff" stroke-width="2.2" stroke-opacity="0.75" paint-order="stroke">Пушкин</text>
<text x="876" y="316.7" font-size="13.8" fill="#333" textLength="64.0" lengthAdjust="spacingAndGlyphs" stroke="#fff" stroke-width="2.2" stroke-opacity="0.75" paint-order="stroke">Отрадное</text>
<text x="810" y="333.2" font-size="13.8" fill="#333" textLength="56.0" lengthAdjust="spacingAndGlyphs" stroke="#fff" stroke-width="2.2" stroke-opacity="0.75" paint-order="stroke">Колпино</text>
<text x="866" y="363.7" font-size="13.8" fill="#333" textLength="78.0" lengthAdjust="spacingAndGlyphs" stroke="#fff" stroke-width="2.2" stroke-opacity="0.75" paint-order="stroke">Никольское</text>
<text x="794.5" y="47.8" font-size="11.1" fill="#555" textLength="41.0" lengthAdjust="spacingAndGlyphs" stroke="#fff" stroke-width="2.2" stroke-opacity="0.75" paint-order="stroke">Токсово</text>
<text x="625.5" y="76.3" font-size="11.1" fill="#555" textLength="52.0" lengthAdjust="spacingAndGlyphs" stroke="#fff" stroke-width="2.2" stroke-opacity="0.75" paint-order="stroke">Песочный</text>
<text x="760.7" y="83.8" font-size="11.1" fill="#555" textLength="81.0" lengthAdjust="spacingAndGlyphs" stroke="#fff" stroke-width="2.2" stroke-opacity="0.75" paint-order="stroke">Кузьмоловский</text>
<text x="695" y="103.8" font-size="11.1" fill="#555" textLength="56.0" lengthAdjust="spacingAndGlyphs" stroke="#fff" stroke-width="2.2" stroke-opacity="0.75" paint-order="stroke">Парголово</text>
<text x="766" y="127.8" font-size="11.1" fill="#555" textLength="41.0" lengthAdjust="spacingAndGlyphs" stroke="#fff" stroke-width="2.2" stroke-opacity="0.75" paint-order="stroke">Мурино</text>
<text x="847" y="128.8" font-size="11.1" fill="#555" textLength="57.0" lengthAdjust="spacingAndGlyphs" stroke="#fff" stroke-width="2.2" stroke-opacity="0.75" paint-order="stroke">Романовка</text>
<text x="605.5" y="148.8" font-size="11.1" fill="#555" textLength="54.5" lengthAdjust="spacingAndGlyphs" stroke="#fff" stroke-width="2.2" stroke-opacity="0.75" paint-order="stroke">Лисий Нос</text>
<text x="941" y="173.8" font-size="11.1" fill="#555" textLength="96.0" lengthAdjust="spacingAndGlyphs" stroke="#fff" stroke-width="2.2" stroke-opacity="0.75" paint-order="stroke">пос. им. Морозова</text>
<text x="832.5" y="207.8" font-size="11.1" fill="#555" textLength="35.0" lengthAdjust="spacingAndGlyphs" stroke="#fff" stroke-width="2.2" stroke-opacity="0.75" paint-order="stroke">Старая</text>
<text x="949.5" y="204.8" font-size="11.1" fill="#555" textLength="74.5" lengthAdjust="spacingAndGlyphs" stroke="#fff" stroke-width="2.2" stroke-opacity="0.75" paint-order="stroke">Шлиссельбург</text>
<text x="765.6" y="226.8" font-size="11.1" fill="#555" textLength="42.4" lengthAdjust="spacingAndGlyphs" stroke="#fff" stroke-width="2.2" stroke-opacity="0.75" paint-order="stroke">Кудрово</text>
<text x="406" y="188.3" font-size="11.1" fill="#555" textLength="46.0" lengthAdjust="spacingAndGlyphs" stroke="#fff" stroke-width="2.2" stroke-opacity="0.75" paint-order="stroke">Лебяжье</text>
<text x="600" y="286.8" font-size="11.1" fill="#555" textLength="48.0" lengthAdjust="spacingAndGlyphs" stroke="#fff" stroke-width="2.2" stroke-opacity="0.75" paint-order="stroke">Горбунки</text>
<text x="739" y="293.8" font-size="11.1" fill="#555" textLength="46.0" lengthAdjust="spacingAndGlyphs" stroke="#fff" stroke-width="2.2" stroke-opacity="0.75" paint-order="stroke">Шушары</text>
<text x="566" y="368.8" font-size="11.1" fill="#555" textLength="89.0" lengthAdjust="spacingAndGlyphs" stroke="#fff" stroke-width="2.2" stroke-opacity="0.75" paint-order="stroke">Русско-Высоцкое</text>
<text x="756" y="375.8" font-size="11.1" fill="#555" textLength="49.0" lengthAdjust="spacingAndGlyphs" stroke="#fff" stroke-width="2.2" stroke-opacity="0.75" paint-order="stroke">Павловск</text>
<text x="831" y="295.8" font-size="11.1" fill="#555" textLength="74.5" lengthAdjust="spacingAndGlyphs" stroke="#fff" stroke-width="2.2" stroke-opacity="0.75" paint-order="stroke">Металлострой</text>
<text x="791" y="313.8" font-size="11.1" fill="#555" textLength="60.0" lengthAdjust="spacingAndGlyphs" stroke="#fff" stroke-width="2.2" stroke-opacity="0.75" paint-order="stroke">Понтонный</text>
<text x="987.5" y="330.8" font-size="11.1" fill="#555" textLength="20.0" lengthAdjust="spacingAndGlyphs" stroke="#fff" stroke-width="2.2" stroke-opacity="0.75" paint-order="stroke">Мга</text>
<text x="930" y="267.8" font-size="11.1" fill="#555" textLength="50.0" lengthAdjust="spacingAndGlyphs" stroke="#fff" stroke-width="2.2" stroke-opacity="0.75" paint-order="stroke">Дубровка</text>
<text x="874" y="405.8" font-size="11.1" fill="#555" textLength="56.0" lengthAdjust="spacingAndGlyphs" stroke="#fff" stroke-width="2.2" stroke-opacity="0.75" paint-order="stroke">Ульяновка</text>
<text x="1052.5" y="245.8" font-size="11.1" fill="#555" textLength="65.5" lengthAdjust="spacingAndGlyphs" stroke="#fff" stroke-width="2.2" stroke-opacity="0.75" paint-order="stroke">Приладожский</text>
<text x="1492" y="60.8" font-size="11.1" fill="#555" textLength="54.0" lengthAdjust="spacingAndGlyphs" stroke="#fff" stroke-width="2.2" stroke-opacity="0.75" paint-order="stroke">Сясьстрой</text>
<text x="149" y="121.4" font-size="13" fill="#4577ad" textLength="92.0" lengthAdjust="spacingAndGlyphs" font-style="italic">Финский залив</text>
<text x="175" y="271.8" font-size="11.2" fill="#4577ad" textLength="82.0" lengthAdjust="spacingAndGlyphs" font-style="italic">Копорская губа</text>
<text x="29.6" y="315.7" font-size="11" fill="#4577ad" textLength="44.7" lengthAdjust="spacingAndGlyphs" font-style="italic">Лужская</text>
<text x="40" y="327.2" font-size="11" fill="#4577ad" textLength="23.0" lengthAdjust="spacingAndGlyphs" font-style="italic">губа</text>
<text x="581.5" y="199.3" font-size="11" fill="#4577ad" textLength="68.1" lengthAdjust="spacingAndGlyphs" font-style="italic">Невская губа</text>
<text x="583.75" y="112.5" font-size="11" fill="#4577ad" textLength="95.0" lengthAdjust="spacingAndGlyphs" font-style="italic">оз. Сестрорецкий</text>
<text x="613.75" y="122.5" font-size="11" fill="#4577ad" textLength="36.2" lengthAdjust="spacingAndGlyphs" font-style="italic">Разлив</text>
<text x="1057.5" y="123.7" font-size="11" fill="#4577ad" textLength="18.5" lengthAdjust="spacingAndGlyphs" font-style="italic">бух.</text>
<text x="1023.75" y="134.7" font-size="11" fill="#4577ad" textLength="84.2" lengthAdjust="spacingAndGlyphs" font-style="italic">Петрокрепость</text>
<rect x="749.5" y="59.5" width="26.0" height="8.5" rx="1" fill="#4a8cc5"/>
<text x="751.0" y="66.8" font-size="8.4" font-weight="700" fill="#fff" textLength="23.0" lengthAdjust="spacingAndGlyphs">A-121</text>
<rect x="571" y="135" width="26" height="8" rx="1" fill="#4a8cc5"/>
<text x="572.5" y="142.0" font-size="8.4" font-weight="700" fill="#fff" textLength="23.0" lengthAdjust="spacingAndGlyphs">A-118</text>
<rect x="809.5" y="179.5" width="26.5" height="9.5" rx="1" fill="#4a8cc5"/>
<text x="811.0" y="187.3" font-size="8.4" font-weight="700" fill="#fff" textLength="23.5" lengthAdjust="spacingAndGlyphs">A-118</text>
<rect x="532.5" y="245" width="26.5" height="9" rx="1" fill="#4a8cc5"/>
<text x="534.0" y="252.5" font-size="8.4" font-weight="700" fill="#fff" textLength="23.5" lengthAdjust="spacingAndGlyphs">A-118</text>
<rect x="684" y="286" width="27" height="9" rx="1" fill="#4a8cc5"/>
<text x="685.5" y="293.5" font-size="8.4" font-weight="700" fill="#fff" textLength="24.0" lengthAdjust="spacingAndGlyphs">A-118</text>
<rect x="721" y="345" width="21" height="9" rx="1" fill="#4a8cc5"/>
<text x="722.5" y="352.5" font-size="8.4" font-weight="700" fill="#fff" textLength="18.0" lengthAdjust="spacingAndGlyphs">P-23</text>
<rect x="528" y="391" width="27" height="9" rx="1" fill="#4a8cc5"/>
<text x="529.5" y="398.5" font-size="8.4" font-weight="700" fill="#fff" textLength="24.0" lengthAdjust="spacingAndGlyphs">A-180</text>
<rect x="840" y="231" width="20" height="9" rx="1" fill="#4a8cc5"/>
<text x="841.5" y="238.5" font-size="8.4" font-weight="700" fill="#fff" textLength="17.0" lengthAdjust="spacingAndGlyphs">P-21</text>
<rect x="964" y="219" width="18.5" height="8.5" rx="1" fill="#4a8cc5"/>
<text x="965.5" y="226.3" font-size="8.4" font-weight="700" fill="#fff" textLength="15.5" lengthAdjust="spacingAndGlyphs">P-21</text>
<rect x="1525" y="128.75" width="22" height="8.75" rx="1" fill="#4a8cc5"/>
<text x="1526.5" y="136.1" font-size="8.4" font-weight="700" fill="#fff" textLength="19.0" lengthAdjust="spacingAndGlyphs">A-114</text></g>
</svg>

<div class="abs" style="left:152px;top:18.5px;width:62px;height:15.5px;background:#f5f7f7;color:#222;font-size:10.6px;line-height:15.5px;text-align:center;white-space:nowrap">Мониторинг</div>
<!-- controls -->
<div class="ctl" style="left:14.5px;top:15px;height:25px"><svg width="25" height="25" viewBox="0 0 25 25"><path d="M6 12.5c2-2.6 4-3.8 6.5-3.8s4.5 1.2 6.5 3.8c-2 2.6-4 3.8-6.5 3.8S8 15.1 6 12.5z" fill="none" stroke="#666" stroke-width="1.1"/><circle cx="12.5" cy="12.3" r="2.4" fill="#555"/></svg></div>
<div class="ctl" style="left:15px;top:55px;height:24px"><svg width="25" height="24" viewBox="0 0 25 24"><path d="M6 8l4-1.5 4.5 1.5 4.5-1.5v9L14.5 17 10 15.5 6 17z" fill="#6a6a6a"/><path d="M10 6.5v9M14.5 8v9" stroke="#fff" stroke-width="0.9"/></svg></div>
<div class="ctl" style="left:15px;top:93px;height:50px"><div style="position:absolute;left:0;top:25px;width:25px;height:1px;background:#ddd"></div><svg width="25" height="50" viewBox="0 0 25 50"><path d="M12.5 7.5v10M7.5 12.5h10M8 38.5h9" stroke="#555" stroke-width="1.8"/></svg></div>
<div class="abs" style="left:23px;top:152px;width:9px;height:157px;background:#8a9297;border-radius:4px"></div>
<div class="abs" style="left:20px;top:246px;width:15px;height:15px;background:#fff;border-radius:2px;box-shadow:0 0 1px rgba(0,0,0,.3)"></div>
<!-- scale -->
<svg class="abs" style="left:6.5px;top:330px" width="75" height="30" viewBox="0 0 75 30"><path d="M4.5 3v24M4.5 15h63.5M68 3v12M56 15v12" stroke="#111" stroke-width="1.6" fill="none"/><text x="20" y="13" font-family="Liberation Sans" font-weight="700" font-size="9.5" fill="#222">10 km</text><text x="19" y="26" font-family="Liberation Sans" font-weight="700" font-size="9.5" fill="#222">5 mi</text></svg>
<!-- yandex logo top right -->
<svg class="abs" style="left:1560px;top:16px" width="24" height="24" viewBox="0 0 24 24"><path d="M11 3.5C7 4 4 7.5 4 11.5c0 1.5.5 3 1.3 4" fill="none" stroke="#d8203f" stroke-width="2.6" stroke-linecap="round"/><path d="M5.5 16c1.8 2.3 4.5 3.5 7.5 3.3 1.6-.1 3-.6 4.2-1.5" fill="none" stroke="#d8203f" stroke-width="2.4" stroke-linecap="round"/><path d="M13.5 4c3.3 2.5 5.3 6.3 5.5 10" fill="none" stroke="#1f5a92" stroke-width="2" stroke-linecap="round"/></svg>
<!-- copyright -->
<div class="abs" style="left:1342px;top:348.5px;width:203px;height:12.5px;background:rgba(255,255,255,0.55)"></div>
<div class="abs" style="left:1345px;top:348px;font-size:12.6px;color:#444;white-space:nowrap">© Яндекс <span style="text-decoration:underline;color:#555">Условия использования</span></div>
<div class="abs" style="left:1418px;top:344px;font-size:11px;font-weight:700;color:#111;white-space:nowrap;letter-spacing:0.35px">N 59° 41.3658' ; E 030° 22.3022'</div>
<div class="abs" style="left:1552px;top:349px;font-size:14px;color:#444;white-space:nowrap;letter-spacing:-1.6px;transform:scaleY(1.12)"><span style="color:#d9223a">Я</span>ндекс</div>
</div>

<div class="abs" style="left:1105px;top:68px;width:420px;height:202px;background:#fff;box-shadow:0 1px 3px rgba(0,0,0,.35)">
<div class="abs" style="left:0;top:0;width:420px;height:22.5px;background:#1878b3"></div>
<div class="abs" style="left:10px;top:4px;font-size:11.4px;font-weight:700;color:#eaf6ff;line-height:14px;white-space:nowrap">Онлайн-уведомления</div>
<svg class="abs" style="left:380px;top:5px" width="12" height="12" viewBox="0 0 12 12"><path d="M2.5 6l3.5-3.5L9.5 6M2.5 10l3.5-3.5L9.5 10" fill="none" stroke="#dff1fc" stroke-width="1.4"/></svg>
<svg class="abs" style="left:402px;top:5px" width="12" height="12" viewBox="0 0 12 12"><path d="M2 2l8 8M10 2l-8 8" stroke="#e6f4fd" stroke-width="1.5"/></svg>
<div class="abs" style="left:0;top:22.5px;width:420px;height:6.5px;background:#f1f3f5"></div>
<div class="abs" style="left:398px;top:29px;width:19px;height:154px;background:#f0f0f0"></div>
<svg class="abs" style="left:402px;top:33px" width="10" height="8" viewBox="0 0 10 8"><path d="M1.5 6.5L5 2.5l3.5 4z" fill="#333"/></svg>
<div class="abs" style="left:402px;top:151px;width:11px;height:16px;background:#bfbfbf"></div>
<svg class="abs" style="left:402px;top:171px" width="10" height="8" viewBox="0 0 10 8"><path d="M1.5 1.5L5 5.5l3.5-4z" fill="#999"/></svg>
<div class="prow" style="top:29.5px">
<svg class="abs" style="left:9px;top:6px" width="8" height="13" viewBox="0 0 8 13"><rect x="1" y="1.5" width="6" height="10.5" rx="1.5" fill="#7a1420"/><rect x="2" y="4" width="4" height="6" fill="#f4d6c8"/><rect x="2.5" y="0" width="3" height="2" fill="#5a0a14"/></svg>
<span class="pn">mobileye+galileo</span><span class="pm">Пешеход в опасной зоне!</span>
<svg class="abs" style="left:357px;top:7.5px" width="10" height="10" viewBox="0 0 10 10"><rect x="0.5" y="0.5" width="9" height="9" fill="#d5284f"/><rect x="2" y="2" width="6" height="6" fill="none" stroke="#c2204a" stroke-width="1"/></svg>
<svg class="abs" style="left:375px;top:7.5px" width="10" height="10" viewBox="0 0 10 10"><path d="M1.5 1.5l7 7M8.5 1.5l-7 7" stroke="#ff4a4a" stroke-width="2.2" opacity="0.8"/></svg>
</div>
<div class="prow" style="top:55px">
<svg class="abs" style="left:9px;top:6px" width="8" height="13" viewBox="0 0 8 13"><rect x="1" y="1.5" width="6" height="10.5" rx="1.5" fill="#7a1420"/><rect x="2" y="4" width="4" height="6" fill="#f4d6c8"/><rect x="2.5" y="0" width="3" height="2" fill="#5a0a14"/></svg>
<span class="pn">mobileye+galileo</span><span class="pm">Пешеход в опасной зоне!</span>
<svg class="abs" style="left:357px;top:7.5px" width="10" height="10" viewBox="0 0 10 10"><rect x="0.5" y="0.5" width="9" height="9" fill="#d5284f"/><rect x="2" y="2" width="6" height="6" fill="none" stroke="#c2204a" stroke-width="1"/></svg>
<svg class="abs" style="left:375px;top:7.5px" width="10" height="10" viewBox="0 0 10 10"><path d="M1.5 1.5l7 7M8.5 1.5l-7 7" stroke="#ff4a4a" stroke-width="2.2" opacity="0.8"/></svg>
</div>
<div class="prow" style="top:80.5px">
<svg class="abs" style="left:9px;top:6px" width="8" height="13" viewBox="0 0 8 13"><rect x="1" y="1.5" width="6" height="10.5" rx="1.5" fill="#7a1420"/><rect x="2" y="4" width="4" height="6" fill="#f4d6c8"/><rect x="2.5" y="0" width="3" height="2" fill="#5a0a14"/></svg>
<span class="pn">mobileye+galileo</span><span class="pm">Превышение более 30 км/ч</span>
<svg class="abs" style="left:357px;top:7.5px" width="10" height="10" viewBox="0 0 10 10"><rect x="0.5" y="0.5" width="9" height="9" fill="#d5284f"/><rect x="2" y="2" width="6" height="6" fill="none" stroke="#c2204a" stroke-width="1"/></svg>
<svg class="abs" style="left:375px;top:7.5px" width="10" height="10" viewBox="0 0 10 10"><path d="M1.5 1.5l7 7M8.5 1.5l-7 7" stroke="#ff4a4a" stroke-width="2.2" opacity="0.8"/></svg>
</div>
<div class="prow" style="top:106px">
<svg class="abs" style="left:9px;top:6px" width="8" height="13" viewBox="0 0 8 13"><rect x="1" y="1.5" width="6" height="10.5" rx="1.5" fill="#7a1420"/><rect x="2" y="4" width="4" height="6" fill="#f4d6c8"/><rect x="2.5" y="0" width="3" height="2" fill="#5a0a14"/></svg>
<span class="pn">mobileye+galileo</span><span class="pm">Опасность столкновения с пешеходом</span>
<svg class="abs" style="left:357px;top:7.5px" width="10" height="10" viewBox="0 0 10 10"><rect x="0.5" y="0.5" width="9" height="9" fill="#d5284f"/><rect x="2" y="2" width="6" height="6" fill="none" stroke="#c2204a" stroke-width="1"/></svg>
<svg class="abs" style="left:375px;top:7.5px" width="10" height="10" viewBox="0 0 10 10"><path d="M1.5 1.5l7 7M8.5 1.5l-7 7" stroke="#ff4a4a" stroke-width="2.2" opacity="0.8"/></svg>
</div>
<div class="prow" style="top:131.5px">
<svg class="abs" style="left:9px;top:6px" width="8" height="13" viewBox="0 0 8 13"><rect x="1" y="1.5" width="6" height="10.5" rx="1.5" fill="#7a1420"/><rect x="2" y="4" width="4" height="6" fill="#f4d6c8"/><rect x="2.5" y="0" width="3" height="2" fill="#5a0a14"/></svg>
<span class="pn">mobileye+galileo</span><span class="pm">Пешеход в опасной зоне!</span>
<svg class="abs" style="left:357px;top:7.5px" width="10" height="10" viewBox="0 0 10 10"><rect x="0.5" y="0.5" width="9" height="9" fill="#d5284f"/><rect x="2" y="2" width="6" height="6" fill="none" stroke="#c2204a" stroke-width="1"/></svg>
<svg class="abs" style="left:375px;top:7.5px" width="10" height="10" viewBox="0 0 10 10"><path d="M1.5 1.5l7 7M8.5 1.5l-7 7" stroke="#ff4a4a" stroke-width="2.2" opacity="0.8"/></svg>
</div>
<div class="prow" style="top:157px">
<svg class="abs" style="left:9px;top:6px" width="8" height="13" viewBox="0 0 8 13"><rect x="1" y="1.5" width="6" height="10.5" rx="1.5" fill="#7a1420"/><rect x="2" y="4" width="4" height="6" fill="#f4d6c8"/><rect x="2.5" y="0" width="3" height="2" fill="#5a0a14"/></svg>
<span class="pn">mobileye+galileo</span><span class="pm">Пешеход в опасной зоне!</span>
<svg class="abs" style="left:357px;top:7.5px" width="10" height="10" viewBox="0 0 10 10"><rect x="0.5" y="0.5" width="9" height="9" fill="#d5284f"/><rect x="2" y="2" width="6" height="6" fill="none" stroke="#c2204a" stroke-width="1"/></svg>
<svg class="abs" style="left:375px;top:7.5px" width="10" height="10" viewBox="0 0 10 10"><path d="M1.5 1.5l7 7M8.5 1.5l-7 7" stroke="#ff4a4a" stroke-width="2.2" opacity="0.8"/></svg>
</div>
<div class="abs psep" style="top:54px"></div><div class="abs psep" style="top:80px"></div><div class="abs psep" style="top:105px"></div><div class="abs psep" style="top:131px"></div><div class="abs psep" style="top:156px"></div>
<div class="abs" style="left:9px;top:183px;font-size:11.4px;color:#222;line-height:14px;white-space:nowrap">Удалить все | Удалить прочитанные</div>
</div>

<div class="abs" style="left:1px;top:409px;width:1598px;height:30.5px;background:#efefef;border:1px solid #cdcdcd;border-bottom:none"></div>
<svg class="abs" style="left:9px;top:418px" width="11" height="12" viewBox="0 0 11 12"><path d="M5.5 1.5L1.5 6l4 4.5M10 1.5L6 6l4 4.5" fill="none" stroke="#aaa" stroke-width="1.2"/></svg>
<svg class="abs" style="left:37px;top:418px" width="8" height="12" viewBox="0 0 8 12"><path d="M6.5 1.5L2.5 6l4 4.5" fill="none" stroke="#aaa" stroke-width="1.2"/></svg>
<div class="abs" style="left:56px;top:414px;width:29.5px;height:20px;background:#f1f1f1;border:1px solid #c8c8c8;color:#9a9a9a;text-align:center;line-height:18px;font-size:11.4px;-webkit-font-smoothing:antialiased">1</div>
<div class="abs tbtxt" style="left:89px;top:417px">из 1</div>
<svg class="abs" style="left:122.5px;top:418px" width="8" height="12" viewBox="0 0 8 12"><path d="M1.5 1.5l4 4.5-4 4.5" fill="none" stroke="#aaa" stroke-width="1.2"/></svg>
<svg class="abs" style="left:147px;top:418px" width="11" height="12" viewBox="0 0 11 12"><path d="M1 1.5L5 6l-4 4.5M5.5 1.5l4 4.5-4 4.5" fill="none" stroke="#aaa" stroke-width="1.2"/></svg>
<div class="abs tsep" style="left:164px"></div>
<div class="abs tbtxt" style="left:178px;top:417px">Строки с 1 по 19 из 19</div>
<div class="abs tsep" style="left:311px"></div>
<div class="abs" style="left:325px;top:414px;width:43px;height:20px;background:#fff;border:1px solid #c8c8c8"></div>
<div class="abs tbtxt" style="left:330px;top:417px">50</div>
<svg class="abs" style="left:353px;top:421px" width="8" height="6" viewBox="0 0 8 6"><path d="M0.5 1h7L4 5z" fill="#222"/></svg>
<div class="abs tsep" style="left:382px"></div>
<div class="abs tsep" style="left:1265px"></div>
<svg class="abs" style="left:1277px;top:415px" width="15" height="18" viewBox="0 0 15 18"><rect x="1.5" y="1.5" width="12" height="15" fill="#fff" stroke="#444" stroke-width="1.3"/><rect x="1.5" y="1.5" width="12" height="3" fill="#444"/><path d="M4 8h7M4 10.8h7M4 13.5h7" stroke="#444" stroke-width="1.1"/></svg>
<div class="abs tsep" style="left:1302px"></div>
<svg class="abs" style="left:1314px;top:415px" width="15" height="18" viewBox="0 0 15 18"><path d="M1.5 1.5h8l4 4v11h-12z" fill="#fff" stroke="#e06a6a" stroke-width="1.2"/><path d="M9.5 1.5v4h4" fill="none" stroke="#e06a6a" stroke-width="1"/><path d="M4 14c2-3 3-6 3-9 0 3 2 6 5 7-3 0-6 1-8 2z" fill="none" stroke="#e04545" stroke-width="1"/></svg>
<svg class="abs" style="left:1350px;top:415px" width="15" height="18" viewBox="0 0 15 18"><path d="M1.5 1.5h8l4 4v11h-12z" fill="#fff" stroke="#6d9aa8" stroke-width="1.2"/><path d="M9.5 1.5v4h4" fill="none" stroke="#6d9aa8" stroke-width="1"/><path d="M4.5 8.5l5 5M9.5 8.5l-5 5" stroke="#6d8fa0" stroke-width="1.1"/></svg>
<div class="abs tsep" style="left:1375px"></div>
<svg class="abs" style="left:1387px;top:415px" width="15" height="18" viewBox="0 0 15 18"><path d="M1.5 1.5h8l4 4v11h-12z" fill="#fff" stroke="#444" stroke-width="1.2"/><path d="M9.5 1.5v4h4" fill="none" stroke="#444" stroke-width="1"/><path d="M11 11H4.5M7 8.5L4.5 11 7 13.5" fill="none" stroke="#333" stroke-width="1.5"/></svg>
<div class="abs tsep" style="left:1412px"></div>
<svg class="abs" style="left:1424px;top:416px" width="17" height="16" viewBox="0 0 17 16"><rect x="4" y="1" width="9" height="4" fill="#fff" stroke="#444" stroke-width="1.2"/><rect x="1" y="5" width="15" height="7" rx="2" fill="#fff" stroke="#444" stroke-width="1.3"/><rect x="4" y="9.5" width="9" height="5" fill="#fff" stroke="#444" stroke-width="1.2"/><path d="M5 12h7" stroke="#444" stroke-width="1"/></svg>
<div class="abs tsep" style="left:1449.5px"></div>
<div class="abs" style="left:1457px;top:414px;width:60px;height:20px;background:#fff;border:1px solid #d2d2d2;border-radius:2px;color:#2f74a6;text-align:center;line-height:18px;font-size:11.4px">Очистить</div>
<div class="abs tsep" style="left:1526px"></div>
<div class="abs" style="left:1530.5px;top:413px;width:60px;height:21.5px;background:#e9e9e9;border:1px solid #d3d3d3;border-radius:3px"></div>
<div class="abs" style="left:1531.5px;top:414px;width:29px;height:19.5px;background:#fff;border-right:1px solid #d3d3d3;border-radius:3px 0 0 3px"></div>
<svg class="abs" style="left:1537px;top:416px" width="17" height="14" viewBox="0 0 17 14"><path d="M1.5 3l4.5-1.5 5 1.5 4.5-1.5v9.5L11 12 6 10.5 1.5 12z" fill="none" stroke="#555" stroke-width="1.1"/><path d="M6 1.5v9M11 3v9" stroke="#555" stroke-width="1"/></svg>
<svg class="abs" style="left:1567px;top:417px" width="15" height="13" viewBox="0 0 15 13"><rect x="1" y="1" width="13" height="11" fill="none" stroke="#999" stroke-width="1.2"/><path d="M1 6.5h13" stroke="#999" stroke-width="1.1"/></svg>

<div class="abs" style="left:1px;top:439px;width:1598px;height:27px;background:#f5f5f5;border-top:1px solid #cfcfcf;border-bottom:1px solid #c4c4c4;border-left:1px solid #cdcdcd;border-right:1px solid #cdcdcd"></div>
<div class="abs" style="left:32.5px;top:441px;width:1px;height:23px;background:#e3e3e3"></div>
<div class="abs" style="left:315.5px;top:441px;width:1px;height:23px;background:#e3e3e3"></div>
<div class="abs" style="left:435px;top:441px;width:1px;height:23px;background:#e3e3e3"></div>
<div class="abs" style="left:554.5px;top:441px;width:1px;height:23px;background:#e3e3e3"></div>
<div class="abs" style="left:805.5px;top:441px;width:1px;height:23px;background:#e3e3e3"></div>
<div class="abs th" style="left:9px;top:445px">№</div>
<div class="abs th" style="left:38.5px;top:445px">Датчик</div>
<div class="abs th" style="left:322px;top:445px">Вкл.</div>
<div class="abs th" style="left:441.5px;top:445px">Откл.</div>
<div class="abs th" style="left:561px;top:445px">Положение</div>
<div class="abs" style="left:1px;top:465px;width:1598px;height:418px;background:#fff;border-left:1px solid #cdcdcd;border-right:1px solid #cdcdcd"></div>
<div class="abs" style="left:2.5px;top:483.28px;width:803.5px;height:1px;background:#e1e1e1"></div>
<div class="abs td" style="left:9px;top:467.80px">1</div>
<div class="abs td" style="left:39px;top:467.80px">Опасность столкновения (FCW)</div>
<div class="abs td lk" style="left:322px;top:467.80px">2018-06-04 18:30:20</div>
<div class="abs td lk" style="left:441.5px;top:467.80px">2018-06-04 18:31:40</div>
<div class="abs td lk" style="left:560.5px;top:467.80px">Санкт-Петербург, Непокорённых пр., 10 к1</div>
<div class="abs" style="left:2.5px;top:502.36px;width:803.5px;height:1px;background:#e1e1e1"></div>
<div class="abs td" style="left:9px;top:486.88px">2</div>
<div class="abs td" style="left:39px;top:486.88px">Опасность столкновения (FCW)</div>
<div class="abs td lk" style="left:322px;top:486.88px">2018-06-06 09:55:48</div>
<div class="abs td lk" style="left:441.5px;top:486.88px">2018-06-06 09:55:50</div>
<div class="abs td lk" style="left:560.5px;top:486.88px">Санкт-Петербург, Рашетова ул., 7</div>
<div class="abs" style="left:2.5px;top:521.44px;width:803.5px;height:1px;background:#e1e1e1"></div>
<div class="abs td" style="left:9px;top:505.96px">3</div>
<div class="abs td" style="left:39px;top:505.96px">Опасность столкновения (FCW)</div>
<div class="abs td lk" style="left:322px;top:505.96px">2018-06-07 09:47:55</div>
<div class="abs td lk" style="left:441.5px;top:505.96px">2018-06-07 09:48:00</div>
<div class="abs td lk" style="left:560.5px;top:505.96px">Санкт-Петербург, Гданьская ул., 19 к1</div>
<div class="abs" style="left:2.5px;top:540.52px;width:803.5px;height:1px;background:#e1e1e1"></div>
<div class="abs td" style="left:9px;top:525.04px">4</div>
<div class="abs td" style="left:39px;top:525.04px">Выезд с полосы влево (Left LDW)</div>
<div class="abs td lk" style="left:322px;top:525.04px">2018-06-08 09:25:56</div>
<div class="abs td lk" style="left:441.5px;top:525.04px">2018-06-08 09:26:07</div>
<div class="abs td lk" style="left:560.5px;top:525.04px">Всеволожск, Дорога Жизни</div>
<div class="abs" style="left:2.5px;top:559.60px;width:803.5px;height:1px;background:#e1e1e1"></div>
<div class="abs td" style="left:9px;top:544.12px">5</div>
<div class="abs td" style="left:39px;top:544.12px">Выезд с полосы влево (Left LDW)</div>
<div class="abs td lk" style="left:322px;top:544.12px">2018-06-08 18:39:16</div>
<div class="abs td lk" style="left:441.5px;top:544.12px">2018-06-08 18:39:27</div>
<div class="abs td lk" style="left:560.5px;top:544.12px">Санкт-Петербург, Пискарёвский пр., 149</div>
<div class="abs" style="left:2.5px;top:578.68px;width:803.5px;height:1px;background:#e1e1e1"></div>
<div class="abs td" style="left:9px;top:563.20px">6</div>
<div class="abs td" style="left:39px;top:563.20px">Опасность столкновения (FCW)</div>
<div class="abs td lk" style="left:322px;top:563.20px">2018-06-08 19:19:50</div>
<div class="abs td lk" style="left:441.5px;top:563.20px">2018-06-08 19:20:49</div>
<div class="abs td lk" style="left:560.5px;top:563.20px">Всеволожск, Московская ул., 22</div>
<div class="abs" style="left:2.5px;top:597.76px;width:803.5px;height:1px;background:#e1e1e1"></div>
<div class="abs td" style="left:9px;top:582.28px">7</div>
<div class="abs td" style="left:39px;top:582.28px">Опасность столкновения (FCW)</div>
<div class="abs td lk" style="left:322px;top:582.28px">2018-06-09 10:05:01</div>
<div class="abs td lk" style="left:441.5px;top:582.28px">2018-06-09 10:05:12</div>
<div class="abs td lk" style="left:560.5px;top:582.28px">Санкт-Петербург, Северный пр., 10 к1</div>
<div class="abs" style="left:2.5px;top:616.84px;width:803.5px;height:1px;background:#e1e1e1"></div>
<div class="abs td" style="left:9px;top:601.36px">8</div>
<div class="abs td" style="left:39px;top:601.36px">Опасность столкновения (FCW)</div>
<div class="abs td lk" style="left:322px;top:601.36px">2018-06-09 16:47:12</div>
<div class="abs td lk" style="left:441.5px;top:601.36px">2018-06-09 16:47:18</div>
<div class="abs td lk" style="left:560.5px;top:601.36px">Санкт-Петербург, Гданьская ул., 7</div>
<div class="abs" style="left:2.5px;top:635.92px;width:803.5px;height:1px;background:#e1e1e1"></div>
<div class="abs td" style="left:9px;top:620.44px">9</div>
<div class="abs td" style="left:39px;top:620.44px">Выезд с полосы вправо (Right LDW)</div>
<div class="abs td lk" style="left:322px;top:620.44px">2018-06-10 15:46:29</div>
<div class="abs td lk" style="left:441.5px;top:620.44px">2018-06-10 15:46:32</div>
<div class="abs td lk" style="left:560.5px;top:620.44px">Шушары, Петербургское шоссе</div>
<div class="abs" style="left:2.5px;top:655.00px;width:803.5px;height:1px;background:#e1e1e1"></div>
<div class="abs td" style="left:9px;top:639.52px">10</div>
<div class="abs td" style="left:39px;top:639.52px">Выезд с полосы вправо (Right LDW)</div>
<div class="abs td lk" style="left:322px;top:639.52px">2018-06-12 07:29:31</div>
<div class="abs td lk" style="left:441.5px;top:639.52px">2018-06-12 07:29:42</div>
<div class="abs td lk" style="left:560.5px;top:639.52px">Санкт-Петербург, Беляевский мост</div>
<div class="abs" style="left:2.5px;top:674.08px;width:803.5px;height:1px;background:#e1e1e1"></div>
<div class="abs td" style="left:9px;top:658.60px">11</div>
<div class="abs td" style="left:39px;top:658.60px">Опасность столкновения (FCW)</div>
<div class="abs td lk" style="left:322px;top:658.60px">2018-06-12 07:30:10</div>
<div class="abs td lk" style="left:441.5px;top:658.60px">2018-06-12 07:30:12</div>
<div class="abs td lk" style="left:560.5px;top:658.60px">Санкт-Петербург, КАД</div>
<div class="abs" style="left:2.5px;top:693.16px;width:803.5px;height:1px;background:#e1e1e1"></div>
<div class="abs td" style="left:9px;top:677.68px">12</div>
<div class="abs td" style="left:39px;top:677.68px">Опасность столкновения (FCW)</div>
<div class="abs td lk" style="left:322px;top:677.68px">2018-06-12 16:00:37</div>
<div class="abs td lk" style="left:441.5px;top:677.68px">2018-06-12 16:00:50</div>
<div class="abs td lk" style="left:560.5px;top:677.68px">Санкт-Петербург, Макарова набережная, 4</div>
<div class="abs" style="left:2.5px;top:712.24px;width:803.5px;height:1px;background:#e1e1e1"></div>
<div class="abs td" style="left:9px;top:696.76px">13</div>
<div class="abs td" style="left:39px;top:696.76px">Опасность столкновения (FCW)</div>
<div class="abs td lk" style="left:322px;top:696.76px">2018-06-12 16:23:58</div>
<div class="abs td lk" style="left:441.5px;top:696.76px">2018-06-12 16:24:29</div>
<div class="abs td lk" style="left:560.5px;top:696.76px">Санкт-Петербург, Ириновский пр.</div>
<div class="abs" style="left:2.5px;top:731.32px;width:803.5px;height:1px;background:#e1e1e1"></div>
<div class="abs td" style="left:9px;top:715.84px">14</div>
<div class="abs td" style="left:39px;top:715.84px">Опасность столкновения (FCW)</div>
<div class="abs td lk" style="left:322px;top:715.84px">2018-06-13 20:05:20</div>
<div class="abs td lk" style="left:441.5px;top:715.84px">2018-06-13 20:06:09</div>
<div class="abs td lk" style="left:560.5px;top:715.84px">Санкт-Петербург, Макарова набережная, 4</div>
<div class="abs" style="left:2.5px;top:750.40px;width:803.5px;height:1px;background:#e1e1e1"></div>
<div class="abs td" style="left:9px;top:734.92px">15</div>
<div class="abs td" style="left:39px;top:734.92px">Опасность столкновения (FCW)</div>
<div class="abs td lk" style="left:322px;top:734.92px">2018-06-14 16:48:19</div>
<div class="abs td lk" style="left:441.5px;top:734.92px">2018-06-14 16:50:19</div>
<div class="abs td lk" style="left:560.5px;top:734.92px">Санкт-Петербург, Макарова набережная, 4</div>
<div class="abs" style="left:2.5px;top:769.48px;width:803.5px;height:1px;background:#e1e1e1"></div>
<div class="abs td" style="left:9px;top:754.00px">16</div>
<div class="abs td" style="left:39px;top:754.00px">Опасность столкновения (FCW)</div>
<div class="abs td lk" style="left:322px;top:754.00px">2018-06-14 16:57:29</div>
<div class="abs td lk" style="left:441.5px;top:754.00px">2018-06-14 16:59:01</div>
<div class="abs td lk" style="left:560.5px;top:754.00px">Санкт-Петербург, Кронверкская набережная</div>
<div class="abs" style="left:2.5px;top:788.56px;width:803.5px;height:1px;background:#e1e1e1"></div>
<div class="abs td" style="left:9px;top:773.08px">17</div>
<div class="abs td" style="left:39px;top:773.08px">Опасность столкновения (FCW)</div>
<div class="abs td lk" style="left:322px;top:773.08px">2018-06-14 17:06:24</div>
<div class="abs td lk" style="left:441.5px;top:773.08px">2018-06-14 17:06:54</div>
<div class="abs td lk" style="left:560.5px;top:773.08px">Санкт-Петербург, Арсенальная набережная</div>
<div class="abs" style="left:2.5px;top:807.64px;width:803.5px;height:1px;background:#e1e1e1"></div>
<div class="abs td" style="left:9px;top:792.16px">18</div>
<div class="abs td" style="left:39px;top:792.16px">Выезд с полосы вправо (Right LDW)</div>
<div class="abs td lk" style="left:322px;top:792.16px">2018-06-19 09:02:41</div>
<div class="abs td lk" style="left:441.5px;top:792.16px">2018-06-19 09:02:52</div>
<div class="abs td lk" style="left:560.5px;top:792.16px">Санкт-Петербург, Шафировский пр., 4</div>
<div class="abs" style="left:2.5px;top:826.72px;width:803.5px;height:1px;background:#e1e1e1"></div>
<div class="abs td" style="left:9px;top:811.24px">19</div>
<div class="abs td" style="left:39px;top:811.24px">Опасность столкновения с пешеходом (Peds FCW)</div>
<div class="abs td lk" style="left:322px;top:811.24px">2018-06-20 18:27:24</div>
<div class="abs td lk" style="left:441.5px;top:811.24px">2018-06-20 18:27:34</div>
<div class="abs td lk" style="left:560.5px;top:811.24px">Санкт-Петербург, Дрезденская ул., 14 к2</div>
<div class="abs" style="left:32.5px;top:465.2px;width:1px;height:362.5px;background:#e3e3e3"></div>
<div class="abs" style="left:315.5px;top:465.2px;width:1px;height:362.5px;background:#e3e3e3"></div>
<div class="abs" style="left:435px;top:465.2px;width:1px;height:362.5px;background:#e3e3e3"></div>
<div class="abs" style="left:554.5px;top:465.2px;width:1px;height:362.5px;background:#e3e3e3"></div>
<div class="abs" style="left:805.5px;top:465.2px;width:1px;height:362.5px;background:#e3e3e3"></div>
<div class="abs" style="left:1px;top:853px;width:1598px;height:25.5px;background:#f4f4f4;border-top:1px solid #cfcfcf;border-bottom:1px solid #dcdcdc;border-left:1px solid #cdcdcd;border-right:1px solid #cdcdcd"></div>
<div class="abs" style="left:32.5px;top:855px;width:1px;height:22px;background:#e3e3e3"></div>
<div class="abs" style="left:315.5px;top:855px;width:1px;height:22px;background:#e3e3e3"></div>
<div class="abs" style="left:435px;top:855px;width:1px;height:22px;background:#e3e3e3"></div>
<div class="abs" style="left:554.5px;top:855px;width:1px;height:22px;background:#e3e3e3"></div>
<div class="abs" style="left:805.5px;top:855px;width:1px;height:22px;background:#e3e3e3"></div>
<div class="abs th" style="left:9px;top:857.5px;color:#222">-----</div>
<div class="abs th" style="left:39px;top:857.5px;color:#222">Опасность столкновения (FCW)</div>
<div class="abs th" style="left:321.5px;top:857.5px;color:#222">2018-06-04 18:30:20</div>
<div class="abs th" style="left:441px;top:857.5px;color:#222">2018-06-20 18:27:34</div>
<div class="abs th" style="left:560.5px;top:857.5px;color:#222">Санкт-Петербург, Непокорённых пр., 10 к1</div>
<div class="abs" style="left:1px;top:880px;width:1598px;height:1px;background:#cfcfcf"></div>
<div class="abs" style="left:0;top:883px;width:1600px;height:27px;background:#888"></div>
<div class="abs" style="left:0;top:909.5px;width:1600px;height:1px;background:#f2f2f2"></div>
<div class="abs" style="left:0;top:910.5px;width:1600px;height:1.5px;background:#111"></div>
<svg class="abs" style="left:10px;top:888px" width="19" height="17" viewBox="0 0 19 17"><rect x="1" y="1" width="17" height="15" fill="none" stroke="#c4c4c4" stroke-width="1.6"/><rect x="1" y="1" width="5" height="15" fill="#c4c4c4"/></svg>
<div class="abs" style="left:38px;top:883px;width:1px;height:27px;background:#a3a3a3"></div>
<svg class="abs" style="left:48px;top:889px" width="15" height="14" viewBox="0 0 15 14"><g fill="#b4b4b4"><rect x="0" y="0" width="4" height="3.5"/><rect x="5.5" y="0" width="4" height="3.5"/><rect x="11" y="0" width="4" height="3.5"/><rect x="0" y="5" width="4" height="3.5"/><rect x="5.5" y="5" width="4" height="3.5"/><rect x="11" y="5" width="4" height="3.5"/><rect x="0" y="10" width="4" height="3.5"/><rect x="5.5" y="10" width="4" height="3.5"/><rect x="11" y="10" width="4" height="3.5"/></g></svg>
<div class="abs" style="left:72px;top:883px;width:1px;height:27px;background:#a3a3a3"></div>
<div class="abs" style="left:583px;top:889.5px;font-size:11.5px;font-weight:700;color:#f4f4f4;line-height:14px;white-space:nowrap">© Техподдержка 8-911-003-03-34</div>
<div class="abs" style="left:1280px;top:883px;width:1px;height:27px;background:#a3a3a3"></div>
<svg class="abs" style="left:1292px;top:889px" width="17" height="15" viewBox="0 0 17 15"><rect x="0.5" y="0.5" width="16" height="14" fill="#fafafa"/><rect x="0.5" y="0.5" width="16" height="3" fill="#fff"/><path d="M3 8h11M3 11h6" stroke="#888" stroke-width="1.3"/></svg>
<div class="abs" style="left:1312px;top:888.5px;width:21px;height:16px;border-radius:8px;background:#e3254a;color:#fff;font-size:11.4px;line-height:16px;text-align:center">62</div>
<svg class="abs" style="left:1344px;top:889px" width="22" height="15" viewBox="0 0 22 15"><rect x="0.5" y="1" width="15" height="11" fill="#a9a9a9"/><path d="M0.5 1l7.5 6 7.5-6" fill="none" stroke="#8c8c8c" stroke-width="1.2"/><path d="M12 10h7M17 7l3 3-3 3" fill="none" stroke="#b0b0b0" stroke-width="2"/></svg>
<div class="abs" style="left:1369px;top:888.5px;width:16px;height:16px;border-radius:8px;background:#7a7a7a;color:#c9c9c9;font-size:11.4px;line-height:16px;text-align:center">0</div>
<svg class="abs" style="left:1397px;top:889px" width="16" height="15" viewBox="0 0 16 15"><rect x="0.5" y="0.5" width="15" height="14" fill="#a8a8a8"/><path d="M1 13l4-5 3 3 3-4 4 6z" fill="#8e8e8e"/><circle cx="4.5" cy="4" r="1.5" fill="#8e8e8e"/></svg>
<div class="abs" style="left:1416px;top:888.5px;width:17px;height:16px;border-radius:8px;background:#7a7a7a;color:#c9c9c9;font-size:11.4px;line-height:16px;text-align:center">0</div>
<div class="abs" style="left:1446px;top:883px;width:1px;height:27px;background:#a3a3a3"></div>
<svg class="abs" style="left:1455px;top:891px" width="19" height="11" viewBox="0 0 19 11"><rect x="0" y="0" width="19" height="11" fill="#a5a5a5"/><path d="M2 3h6M2 5.5h6M2 8h6" stroke="#8e8e8e" stroke-width="1"/><path d="M9.5 0v11" stroke="#8e8e8e" stroke-width="1"/></svg>
<div class="abs" style="left:1485px;top:883px;width:1px;height:27px;background:#a3a3a3"></div>
<div class="abs" style="left:1505px;top:889.5px;font-size:11.5px;color:#f4f4f4;line-height:14px;white-space:nowrap">14:13:21 (+03)</div>
<div class="abs" style="left:1598px;top:883px;width:1px;height:27px;background:#a3a3a3"></div>

</body></html>
